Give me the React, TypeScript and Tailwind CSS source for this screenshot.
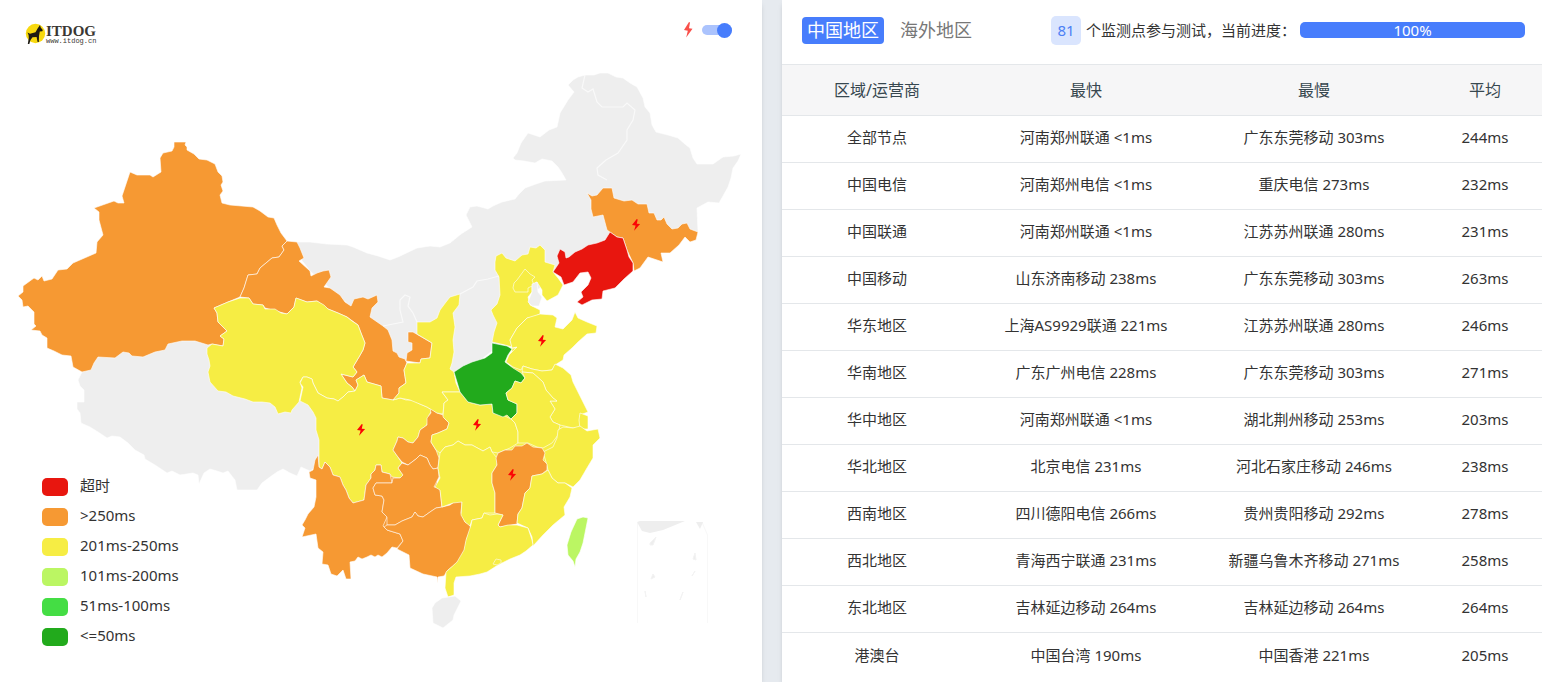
import React, { useState } from 'react';

const ORANGE = '#f69933';
const YELLOW = '#f6ed44';
const GRAY = '#eeeeee';

const BOLT = 'M5 0 L0 8 L3.8 8.8 L2.2 15.5 L8.5 6.8 L5 6.2 L6 0.5 Z';

const REGIONS = [
    { name: '内蒙古', fill: GRAY, points: '297,242 310,242 327,244 347,245 353,247 367,253 378,256 390,260 398,257 417,248 430,246 440,247 450,243 461,234 472,227 466,215 470,207 477,206 488,209 493,206 502,202 515,199 519,194 525,188 536,184 545,181 566,180 562,173 558,167 552,161 542,159 535,163 524,161 515,160 513,158 517,153 521,143 528,133 540,137 549,130 557,127 560,113 568,100 574,92 568,85 573,80 578,77 585,75 594,75 600,73 608,73 616,77 623,78 630,83 637,87 643,98 645,107 650,113 652,125 656,132 668,135 678,138 686,145 690,148 693,158 697,164 713,164 723,157 734,156 741,154 738,161 733,168 731,178 728,187 723,196 719,203 708,202 697,208 698,232 660,240 610,260 565,265 545,285 520,300 500,345 470,368 452,375 420,365 395,357 380,325 350,306 310,271 300,258' },
    { name: '西藏', fill: GRAY, points: '82,372 78,380 80,386 84,390 84,402 77,402 77,409 80,413 81,423 90,427 98,432 107,438 112,436 120,437 128,443 135,450 144,455 145,459 155,465 167,473 172,471 180,475 193,473 198,475 199,484 204,473 210,469 217,471 223,473 228,471 231,475 235,480 237,490 257,490 262,483 270,477 277,472 283,469 290,473 297,476 301,467 310,471 318,466 322,455 322,433 320,418 310,404 301,400 285,400 230,385 215,345 195,335 100,350' },
    { name: '新疆', fill: ORANGE, points: '174,142 186,142 185,145 187,147 187,150 194,154 199,159 207,160 209,161 215,164 218,172 222,176 223,182 221,185 223,191 220,195 222,203 230,205 253,207 260,211 268,217 274,218 277,225 281,233 287,241 282,246 284,250 279,257 272,258 260,268 257,274 248,275 244,288 240,297 228,302 214,308 217,313 218,322 223,327 227,331 220,336 224,339 223,346 212,344 208,345 195,341 182,341 168,344 165,350 155,352 143,357 132,356 129,353 123,352 119,355 115,358 98,357 94,363 91,370 82,372 73,367 71,356 62,355 54,351 47,348 47,338 42,335 40,331 31,330 36,326 34,324 34,312 28,306 23,307 22,300 18,296 23,292 23,286 34,278 38,280 42,276 44,281 52,279 58,270 67,269 73,263 96,253 97,242 103,235 99,220 99,212 94,208 114,201 118,203 124,203 122,196 130,172 137,175 150,175 153,177 161,172 160,158 163,153 172,151 174,147' },
    // fills hairline gaps between the eastern and southern provinces
    { name: 'base', fill: YELLOW, points: '512,348 560,350 550,370 575,412 580,427 575,460 530,510 500,520 460,510 435,470 410,450 380,470 340,460 330,400 395,395 425,405 443,400 455,393 510,400' },
    { name: 'base-south', fill: ORANGE, points: '325,468 372,480 400,470 436,460 438,508 460,515 450,560 405,550 385,545 340,540' },
    { name: '甘肃', fill: ORANGE, points: '287,241 297,242 300,248 304,258 299,261 310,271 311,276 317,273 323,271 329,270 331,277 324,287 330,288 340,295 345,302 351,306 354,299 363,297 368,299 377,295 378,302 372,308 370,317 383,326 388,330 392,340 393,351 397,353 399,357 405,359 407,363 404,370 406,383 399,388 399,393 393,400 382,398 381,386 367,382 364,375 356,380 358,385 355,391 352,387 347,383 341,374 353,377 357,372 353,367 359,357 363,350 365,343 361,333 358,325 347,317 338,313 328,309 317,301 307,302 296,298 294,307 287,314 265,308 263,305 253,304 249,298 240,297 244,288 248,275 257,274 260,268 272,258 279,257 284,250 282,246' },
    { name: '甘肃东', fill: ORANGE, points: '408,332 413,332 432,343 430,358 421,359 420,363 406,361 407,353 412,350 412,343 408,342' },
    { name: '青海', fill: YELLOW, points: '214,308 228,302 240,298 249,298 253,304 263,305 265,309 275,309 281,313 287,314 294,307 296,298 307,302 317,301 324,305 328,309 338,313 347,317 352,321 358,325 361,333 365,343 363,350 359,357 353,367 357,372 353,377 341,374 347,383 352,387 355,391 348,392 343,397 338,401 334,399 327,398 318,393 315,387 313,383 312,379 307,377 303,377 300,382 302,388 299,402 292,410 291,413 285,412 278,414 275,407 270,403 262,402 253,402 245,399 233,396 226,392 218,391 210,382 208,372 210,366 209,360 207,354 207,348 212,344 223,346 224,339 220,336 227,331 218,322 217,313' },
    { name: '四川', fill: YELLOW, points: '303,377 307,377 312,379 313,383 318,393 327,398 334,399 338,401 343,397 348,392 355,391 358,385 356,380 364,375 367,382 381,386 382,398 393,400 400,398 406,400 413,400 420,404 427,407 432,410 429,415 427,425 420,430 418,437 413,443 408,442 403,438 398,437 397,441 393,450 398,457 402,463 398,468 403,475 400,478 392,477 390,474 382,472 381,465 376,465 375,470 371,474 371,478 366,485 364,500 353,503 349,498 346,490 343,485 340,477 333,475 330,467 325,462 322,469 319,467 319,440 316,430 316,418 313,412 308,405 300,401 303,387 300,383' },
    { name: '云南', fill: ORANGE, points: '318,455 319,467 322,469 325,462 330,467 333,475 340,477 343,485 346,490 349,498 353,503 364,500 366,485 371,478 371,474 375,470 376,465 381,465 382,472 390,474 392,483 376,483 373,488 375,495 382,496 384,500 382,512 387,517 383,526 387,530 400,534 403,541 397,548 392,547 387,553 382,557 378,555 375,557 371,555 367,557 362,559 358,557 355,561 350,562 351,579 346,579 343,570 337,576 331,574 328,565 322,564 323,552 318,548 316,534 302,537 305,528 302,525 305,520 308,514 314,507 316,497 316,480 310,478 309,472 313,470 315,460' },
    { name: '重庆', fill: ORANGE, points: '430,408 437,413 443,415 445,419 449,423 447,429 438,433 432,435 431,442 436,450 439,458 438,468 433,469 430,465 427,458 420,455 416,459 408,465 402,462 398,457 393,450 397,441 398,437 403,438 408,442 413,443 418,437 420,430 427,425 427,418 431,413' },
    { name: '贵州', fill: ORANGE, points: '402,463 408,465 416,459 420,455 427,458 430,465 433,469 438,468 439,477 434,487 440,488 442,507 436,508 430,512 423,517 418,516 415,512 412,517 402,521 395,525 387,525 387,517 382,512 384,500 382,496 375,495 373,488 376,483 392,483 393,478 400,478 403,475 398,468' },
    { name: '广西', fill: ORANGE, points: '387,525 395,525 402,521 412,517 415,512 418,516 423,517 430,512 436,508 442,507 450,505 457,500 462,501 461,513 465,522 470,525 471,530 467,538 464,553 457,563 448,570 444,576 438,577 438,583 437,577 423,574 410,568 409,555 397,549 403,541 400,534 387,530 384,527' },
    { name: '陕西', fill: YELLOW, points: '460,294 459,305 453,313 455,327 453,340 454,352 452,363 450,369 454,372 456,383 460,392 442,392 448,400 444,403 443,414 437,413 427,407 410,400 400,398 393,400 399,393 399,388 406,383 404,370 407,363 420,363 421,359 430,358 432,343 417,334 417,322 430,322 437,318 440,310 446,302 450,297' },
    { name: '湖北', fill: YELLOW, points: '442,392 460,392 468,402 480,405 492,404 493,413 503,415 511,419 515,423 518,432 518,443 510,448 498,453 492,452 490,447 483,451 472,445 465,445 458,441 453,445 445,447 440,453 436,450 431,442 432,435 438,433 447,429 449,423 443,417 444,403 448,400' },
    { name: '湖南', fill: YELLOW, points: '440,453 445,447 453,445 458,441 465,445 472,445 483,451 490,447 492,452 497,458 497,465 492,473 492,483 495,493 495,513 484,513 482,518 472,520 470,526 465,522 461,515 462,502 453,503 442,507 440,490 435,487 440,478 438,468' },
    { name: '河北', fill: YELLOW, points: '495,262 496,256 502,253 506,258 515,261 522,255 528,254 530,247 536,248 540,245 545,250 545,262 555,265 553,272 558,278 563,285 558,295 547,301 542,295 542,290 537,282 532,285 532,292 528,297 530,305 540,310 540,314 533,317 527,318 517,328 510,340 512,347 505,345 492,342 494,332 497,323 493,315 491,310 497,304 500,295 499,277 495,270' },
    { name: '北京', fill: YELLOW, points: '513,288 514,283 517,280 525,269 530,274 535,277 532,280 534,285 528,288 528,292 515,292' },
    { name: '天津', fill: GRAY, points: '532,284 537,282 538,292 542,297 539,306 532,306 528,302 532,292' },
    { name: '河南', fill: '#22aa1c', points: '492,343 507,346 512,349 508,355 505,362 513,368 521,373 525,378 521,383 515,381 512,388 506,393 508,400 517,404 517,413 511,419 507,415 503,417 493,413 492,404 480,405 468,402 460,392 457,382 454,372 463,366 472,362 485,358 492,353' },
    { name: '山东', fill: YELLOW, points: '540,314 553,315 557,318 555,327 563,329 572,320 575,312 578,318 587,322 597,326 596,333 587,334 578,342 572,348 564,355 563,360 555,365 552,370 542,371 532,369 523,366 521,370 513,367 506,362 509,355 517,347 512,348 510,340 517,328 527,318' },
    { name: '江苏', fill: YELLOW, points: '523,366 532,369 542,371 552,370 555,364 563,368 571,375 573,382 577,390 582,400 588,412 580,415 582,427 573,428 560,425 553,422 550,417 555,409 550,401 557,401 553,398 546,390 543,382 533,373 522,372' },
    { name: '安徽', fill: YELLOW, points: '522,372 533,373 543,382 546,390 553,398 557,401 550,401 555,409 550,417 553,422 560,425 558,435 552,443 543,448 537,447 528,443 518,443 518,432 515,423 511,419 517,413 517,404 508,400 506,393 512,388 515,381 521,383 525,378' },
    { name: '上海', fill: YELLOW, points: '580,413 588,416 588,429 580,429 579,420' },
    { name: '浙江', fill: YELLOW, points: '563,427 573,428 580,426 587,431 598,429 600,438 593,445 593,458 587,468 580,480 573,487 565,483 558,483 552,478 548,470 546,462 543,452 553,447 557,438 558,430' },
    { name: '江西', fill: ORANGE, points: '496,458 498,453 505,450 512,450 515,446 522,446 527,443 533,447 542,448 545,453 543,460 547,464 547,470 542,474 532,476 530,488 525,493 522,508 518,514 517,524 500,527 498,525 503,515 495,513 495,493 492,483 492,473 497,465' },
    { name: '福建', fill: YELLOW, points: '532,476 542,474 548,470 552,478 558,483 565,483 572,488 570,497 564,507 565,515 553,525 543,535 533,546 532,537 528,528 517,523 518,514 522,508 525,493 530,488' },
    { name: '广东', fill: YELLOW, points: '471,525 472,520 482,518 484,513 490,515 497,514 503,515 498,525 500,527 508,525 517,525 528,528 532,540 533,545 526,551 520,555 510,559 498,565 487,572 480,574 470,576 456,577 454,583 454,595 448,597 445,588 446,572 457,562 464,550 466,540' },
    { name: '海南', fill: GRAY, points: '435,603 442,598 455,596 461,601 454,615 453,620 443,628 433,623 432,608' },
    { name: '台湾', fill: '#bbf663', points: '583,517 588,518 587,523 583,543 580,552 576,559 575,567 573,561 568,555 567,545 571,532 577,519' },
    { name: '吉林', fill: ORANGE, points: '587,193 592,196 597,195 603,188 612,188 614,198 624,201 632,200 638,204 647,204 649,213 654,213 657,220 661,220 664,217 667,224 672,229 678,228 682,224 687,223 690,229 698,232 696,240 690,242 685,237 679,245 670,253 661,253 663,262 648,257 640,268 634,271 633,263 627,250 623,238 617,237 607,230 603,215 593,217 591,209 591,200' },
    { name: '辽宁', fill: '#e8160f', points: '553,272 559,263 557,256 560,249 565,252 566,258 569,257 575,252 582,249 588,245 597,243 605,240 610,232 617,237 623,238 627,250 629,257 633,263 633,271 624,279 615,288 603,291 602,299 592,300 582,305 577,302 583,297 581,292 588,285 591,278 588,272 580,273 573,282 564,285 561,277' },
];

// borders between provinces that share the same grey
const BORDERS = [
    '585,75 582,88 588,92 593,89 597,102 602,107 623,107 627,103 635,110 633,120 627,130 627,140 618,153 606,160 597,168 598,175 607,180',
    '383,326 403,322 400,310 400,300 405,295 410,297 408,306 413,313 417,322',
    '460,294 473,287 477,281 488,279 499,276',
];

const STRIKES = [[632, 219], [538, 335], [357, 424], [473, 419], [508, 469]];

const LEGEND = [
    { color: 'bg-[#e8160f]', label: '超时' },
    { color: 'bg-[#f69933]', label: '>250ms' },
    { color: 'bg-[#f6ed44]', label: '201ms-250ms' },
    { color: 'bg-[#bbf663]', label: '101ms-200ms' },
    { color: 'bg-[#44dd44]', label: '51ms-100ms' },
    { color: 'bg-[#22aa1c]', label: '<=50ms' },
];

const ROWS = [
    ['全部节点', '河南郑州联通 <1ms', '广东东莞移动 303ms', '244ms'],
    ['中国电信', '河南郑州电信 <1ms', '重庆电信 273ms', '232ms'],
    ['中国联通', '河南郑州联通 <1ms', '江苏苏州联通 280ms', '231ms'],
    ['中国移动', '山东济南移动 238ms', '广东东莞移动 303ms', '263ms'],
    ['华东地区', '上海AS9929联通 221ms', '江苏苏州联通 280ms', '246ms'],
    ['华南地区', '广东广州电信 228ms', '广东东莞移动 303ms', '271ms'],
    ['华中地区', '河南郑州联通 <1ms', '湖北荆州移动 253ms', '203ms'],
    ['华北地区', '北京电信 231ms', '河北石家庄移动 246ms', '238ms'],
    ['西南地区', '四川德阳电信 266ms', '贵州贵阳移动 292ms', '278ms'],
    ['西北地区', '青海西宁联通 231ms', '新疆乌鲁木齐移动 271ms', '258ms'],
    ['东北地区', '吉林延边移动 264ms', '吉林延边移动 264ms', '264ms'],
    ['港澳台', '中国台湾 190ms', '中国香港 221ms', '205ms'],
];

const Logo: React.FC = () => (
    <a href="#" className="flex items-center">
        <svg viewBox="0 0 21 22" className="w-[21px] h-[22px]">
            <circle cx="10.5" cy="10.5" r="9.7" fill="#f8d90f" />
            <path d="M15 2 L15.7 4.5 L17.8 7 L17.3 8.3 L14.8 8.4 L14 13 L13.8 19 L12.6 19 L11.6 14 L7.5 14.2 L5.5 17 L4.3 21 L2.8 21 L3.8 15 L3.6 12 L2.5 9.5 L5 10.8 L10.5 9.2 L12.6 5.5 Z" fill="#1d1a12" />
        </svg>
        <span className="flex flex-col text-[#3a3733]">
            <span className="font-['Liberation_Serif',serif] font-bold text-[15px] leading-[13px]">ITDOG</span>
            <span className="font-['Liberation_Mono',monospace] text-[7px] leading-[6px]">www.itdog.cn</span>
        </span>
    </a>
);

const ChinaMap: React.FC<{ showStrikes: boolean }> = ({ showStrikes }) => (
    <svg viewBox="0 60 762 580" className="w-full block">
        {REGIONS.map(r => (
            <polygon
                key={r.name}
                points={r.points}
                fill={r.fill}
                stroke="#fff"
                strokeOpacity={0.6}
                strokeWidth={1}
                strokeLinejoin="round"
            />
        ))}
        {BORDERS.map(b => (
            <polyline key={b} points={b} fill="none" stroke="#fff" strokeOpacity={0.65} strokeWidth={1.2} />
        ))}
        <path d="M493 564 L496 559 L501 560 L501 563 L497 565 Z" fill={YELLOW} stroke="#fbf7b0" />

        {/* 南海诸岛 */}
        <path d="M637.5 623 V523 M707.5 623 V535 L702 522" fill="none" stroke="#f8f8f8" />
        <path d="M637 522 L640 521 H685 L663 530 L650 533 L642 531 Z M696 522 L703 522 L700 529 Z" fill={GRAY} />
        <path d="M656 537 L650 543 L650 545 L653 545 Z M695 553 L693 559 L696 560 Z M653 574 L651 579 L655 577 Z M695 571 L692 576 Z M683 592 L680 600 Z M645 591 L646 597 Z" fill={GRAY} stroke="#f3f3f3" />

        {showStrikes && STRIKES.map(([x, y]) => (
            <path key={x} d={BOLT} transform={`translate(${x} ${y}) scale(0.95 0.75)`} fill="#fb0505" />
        ))}
    </svg>
);

const MapPanel: React.FC = () => {
    const [showStrikes, setShowStrikes] = useState(true);

    return (
        <section className="relative min-w-0 bg-white shadow-md">
            <header className="h-[60px] pl-[25px] pr-[30px] flex items-center justify-between">
                <div className="pt-2">
                    <Logo />
                </div>
                <label className="flex items-center gap-[9px] cursor-pointer">
                    <svg viewBox="0 0 9 16" className="w-[9px] h-4" role="img" aria-label="丢包标记">
                        <path d={BOLT} fill="#f9504a" />
                    </svg>
                    <input
                        type="checkbox"
                        checked={showStrikes}
                        onChange={e => setShowStrikes(e.target.checked)}
                        className="appearance-none w-[30px] h-[10px] rounded-full bg-gray-300 checked:bg-[#abc3fd] flex items-center justify-start checked:justify-end cursor-pointer before:content-[''] before:w-[15px] before:h-[15px] before:shrink-0 before:rounded-full before:bg-[#477dfc]"
                    />
                </label>
            </header>

            <ChinaMap showStrikes={showStrikes} />

            <ul className="absolute left-[42px] bottom-[30px] text-[15px] text-[#333]">
                {LEGEND.map(item => (
                    <li key={item.label} className="h-[30px] flex items-center gap-3">
                        <span className={`w-[26px] h-[18px] rounded-[5px] ${item.color}`} />
                        <span className="pb-[3px]">{item.label}</span>
                    </li>
                ))}
            </ul>
        </section>
    );
};

const ResultPanel: React.FC = () => {
    const [tab, setTab] = useState('中国地区');

    return (
        <section className="min-w-0 bg-white shadow-md">
            <header className="h-16 pl-5 pr-[17px] flex items-center">
                <div className="flex gap-[11px] shrink-0">
                    {['中国地区', '海外地区'].map(name => (
                        <button
                            key={name}
                            onClick={() => setTab(name)}
                            className={`h-[27px] px-[5px] rounded text-[18px] leading-[27px] mb-1 cursor-pointer ${tab === name ? 'bg-[#477dfc] text-white' : 'text-[#777]'}`}
                        >
                            {name}
                        </button>
                    ))}
                </div>
                <div className="ml-[74px] mb-1 flex flex-1 items-center text-[15px]">
                    <span className="w-[30px] h-[29px] shrink-0 rounded-[5px] bg-[#dae5fe] text-[#4c80f5] leading-[29px] text-center">81</span>
                    <span className="ml-[5px] shrink-0">个监测点参与测试，当前进度：</span>
                    <div
                        role="progressbar"
                        aria-valuenow={100}
                        className="flex-1 ml-1 h-4 rounded-[5px] bg-[#477dfc] text-white text-center leading-4"
                    >
                        100%
                    </div>
                </div>
            </header>

            <table className="w-full table-fixed border-collapse text-center text-[15px]">
                <colgroup>
                    <col className="w-1/4" />
                    <col className="w-[30%]" />
                    <col className="w-[30%]" />
                    <col />
                </colgroup>
                <thead>
                    <tr className="h-[51px] bg-[#f6f6f7] border-y border-[#e4e7ea] text-[16px] text-[#37474f]">
                        {['区域/运营商', '最快', '最慢', '平均'].map(h => (
                            <th key={h} className="font-normal">{h}</th>
                        ))}
                    </tr>
                </thead>
                <tbody>
                    {ROWS.map(row => (
                        <tr key={row[0]} className="h-[47px] border-b border-[#e4e7ea] last:border-b-0">
                            {row.map((cell, i) => (
                                <td key={i} className="pb-[3px] whitespace-nowrap">{cell}</td>
                            ))}
                        </tr>
                    ))}
                </tbody>
            </table>
        </section>
    );
};

export default function App() {
    return (
        <main className="min-h-screen grid grid-cols-[762fr_760fr] gap-5 bg-[#e6eaef] text-[#333] font-['Noto_Sans','Noto_Sans_CJK_SC',sans-serif]">
            <MapPanel />
            <ResultPanel />
        </main>
    );
}
